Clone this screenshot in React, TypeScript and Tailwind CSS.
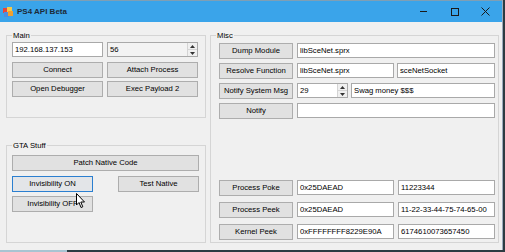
import { ReactNode } from 'react';

const font = { fontFamily: '"Liberation Sans", Arial, sans-serif' };

function Btn({ children, className = '' }: { children: ReactNode; className?: string }) {
  return (
    <div
      className={`h-[16px] flex items-center justify-center bg-[#e1e1e1] border border-[#adadad] text-[7.7px] text-black leading-none whitespace-nowrap ${className}`}
    >
      {children}
    </div>
  );
}

function Field({ value = '', className = '' }: { value?: string; className?: string }) {
  return (
    <div
      className={`h-[15px] flex items-center bg-white border border-[#a9a9a9] px-[2px] text-[7.7px] text-black leading-none whitespace-nowrap overflow-hidden ${className}`}
    >
      {value}
    </div>
  );
}

function Spin({ value, className = '', bg = 'bg-white' }: { value: string; className?: string; bg?: string }) {
  return (
    <div className={`h-[15px] flex border border-[#a9a9a9] ${bg} ${className}`}>
      <div className="flex-1 flex items-center px-[2px] text-[7.7px] leading-none">{value}</div>
      <div className="w-[10px] flex flex-col border-l border-[#d4d4d4] bg-[#f0f0f0]">
        <div className="flex-1 flex items-center justify-center border-b border-[#d4d4d4]">
          <svg width="5" height="3" viewBox="0 0 5 3">
            <path d="M0 3 L2.5 0 L5 3 Z" fill="#333" />
          </svg>
        </div>
        <div className="flex-1 flex items-center justify-center">
          <svg width="5" height="3" viewBox="0 0 5 3">
            <path d="M0 0 L2.5 3 L5 0 Z" fill="#333" />
          </svg>
        </div>
      </div>
    </div>
  );
}

function Group({ title, className = '', children }: { title: string; className?: string; children: ReactNode }) {
  return (
    <div className={`relative border border-[#d5d5d5] ${className}`}>
      <span className="absolute -top-[5px] left-[5px] px-[1px] bg-[#f0f0f0] text-[7.7px] leading-[9px] text-black">
        {title}
      </span>
      {children}
    </div>
  );
}

export default function App() {
  return (
    <div className="w-[505px] h-[252px] bg-[#2d3b42] flex flex-col overflow-hidden" style={font}>
      <div className="w-[503px] h-[250px] flex flex-col bg-[#f0f0f0] border-r border-[#9ab]">
        {/* title bar */}
        <div className="h-[22px] flex items-center bg-[#3aa4ea] border-t border-[#7f9fb5]">
          <svg width="10" height="10" viewBox="0 0 10 10" className="ml-[3px]">
            <rect x="0" y="1" width="5" height="5" fill="#e8463c" />
            <rect x="4" y="0" width="5" height="5" fill="#f7c948" />
            <rect x="1" y="5" width="5" height="5" fill="#4a8fe0" />
            <rect x="5" y="4" width="5" height="5" fill="#f0a030" />
          </svg>
          <span className="ml-[4px] text-[8px] font-bold text-[#1c2a38]">PS4 API Beta</span>
          <div className="flex-1" />
          <div className="w-[31px] h-full flex items-center justify-center">
            <div className="w-[7px] h-[1px] bg-[#1a1a1a]" />
          </div>
          <div className="w-[31px] h-full flex items-center justify-center">
            <div className="w-[8px] h-[8px] border border-[#1a1a1a]" />
          </div>
          <div className="w-[31px] h-full flex items-center justify-center mr-[1px]">
            <svg width="9" height="9" viewBox="0 0 9 9">
              <path d="M0.5 0.5 L8.5 8.5 M8.5 0.5 L0.5 8.5" stroke="#1a1a1a" strokeWidth="1" />
            </svg>
          </div>
        </div>

        {/* body */}
        <div className="relative flex-1 flex gap-[4px] pl-[6px] pt-[13px]">
          <div className="w-[200px] flex flex-col">
            <Group title="Main" className="h-[83px] pl-[5px] pt-[6px]">
              <div className="flex gap-[4px]">
                <Field value="192.168.137.153" className="w-[91px]" />
                <Spin value="56" className="w-[91px]" bg="bg-[#f3f3f3]" />
              </div>
              <div className="flex gap-[4px] mt-[5px]">
                <Btn className="w-[91px]">Connect</Btn>
                <Btn className="w-[91px]">Attach Process</Btn>
              </div>
              <div className="flex gap-[4px] mt-[3px]">
                <Btn className="w-[91px]">Open Debugger</Btn>
                <Btn className="w-[91px]">Exec Payload 2</Btn>
              </div>
            </Group>

            <Group title="GTA Stuff" className="mt-[27px] h-[98px] pl-[5px] pt-[9px]">
              <Btn className="w-[187px]">Patch Native Code</Btn>
              <div className="flex justify-between w-[187px] mt-[5px]">
                <Btn className="w-[81px] !border-[#2b7fd0] !bg-[#e3e5e8]">Invisibility ON</Btn>
                <Btn className="w-[81px]">Test Native</Btn>
              </div>
              <Btn className="w-[81px] mt-[4px]">Invisibility OFF</Btn>
            </Group>
          </div>

          <Group title="Misc" className="w-[289px] h-[208px] flex flex-col pl-[8px] pr-[3px] pt-[7px] pb-[2px]">
            <div className="flex flex-col gap-[4px]">
              <div className="flex items-start gap-[4px]">
                <Btn className="w-[74px]">Dump Module</Btn>
                <Field value="libSceNet.sprx" className="flex-1" />
              </div>
              <div className="flex items-start gap-[4px]">
                <Btn className="w-[74px]">Resolve Function</Btn>
                <Field value="libSceNet.sprx" className="w-[97px]" />
                <Field value="sceNetSocket" className="flex-1 ml-[-1px]" />
              </div>
              <div className="flex items-start gap-[4px]">
                <Btn className="w-[74px]">Notify System Msg</Btn>
                <Spin value="29" className="w-[51px]" />
                <Field value="Swag money $$$" className="flex-1 ml-[-1px]" />
              </div>
              <div className="flex items-start gap-[4px]">
                <Btn className="w-[74px]">Notify</Btn>
                <Field className="flex-1" />
              </div>
            </div>

            <div className="mt-auto flex flex-col gap-[6px]">
              <div className="flex items-start gap-[4px]">
                <Btn className="w-[74px] h-[15px]">Process Poke</Btn>
                <Field value="0x25DAEAD" className="w-[97px]" />
                <Field value="11223344" className="flex-1" />
              </div>
              <div className="flex items-start gap-[4px]">
                <Btn className="w-[74px] h-[15px]">Process Peek</Btn>
                <Field value="0x25DAEAD" className="w-[97px]" />
                <Field value="11-22-33-44-75-74-65-00" className="flex-1" />
              </div>
              <div className="flex items-start gap-[4px]">
                <Btn className="w-[74px] h-[15px]">Kernel Peek</Btn>
                <Field value="0xFFFFFFFF8229E90A" className="w-[97px]" />
                <Field value="6174610073657450" className="flex-1" />
              </div>
            </div>
          </Group>

          {/* mouse pointer */}
          <svg width="10" height="16" viewBox="0 0 10 16" className="absolute left-[76px] top-[171px]">
            <path d="M0.5 0.5 L0.5 12 L3 9.5 L5 14.5 L6.8 13.8 L4.8 9 L8.5 9 Z" fill="#fff" stroke="#000" strokeWidth="1" strokeLinejoin="round" />
          </svg>
        </div>
      </div>
      <div className="flex-1 flex">
        <div className="w-[67px] bg-[#a9c4d2]" />
        <div className="flex-1 bg-[#2d3b42]" />
      </div>
    </div>
  );
}
